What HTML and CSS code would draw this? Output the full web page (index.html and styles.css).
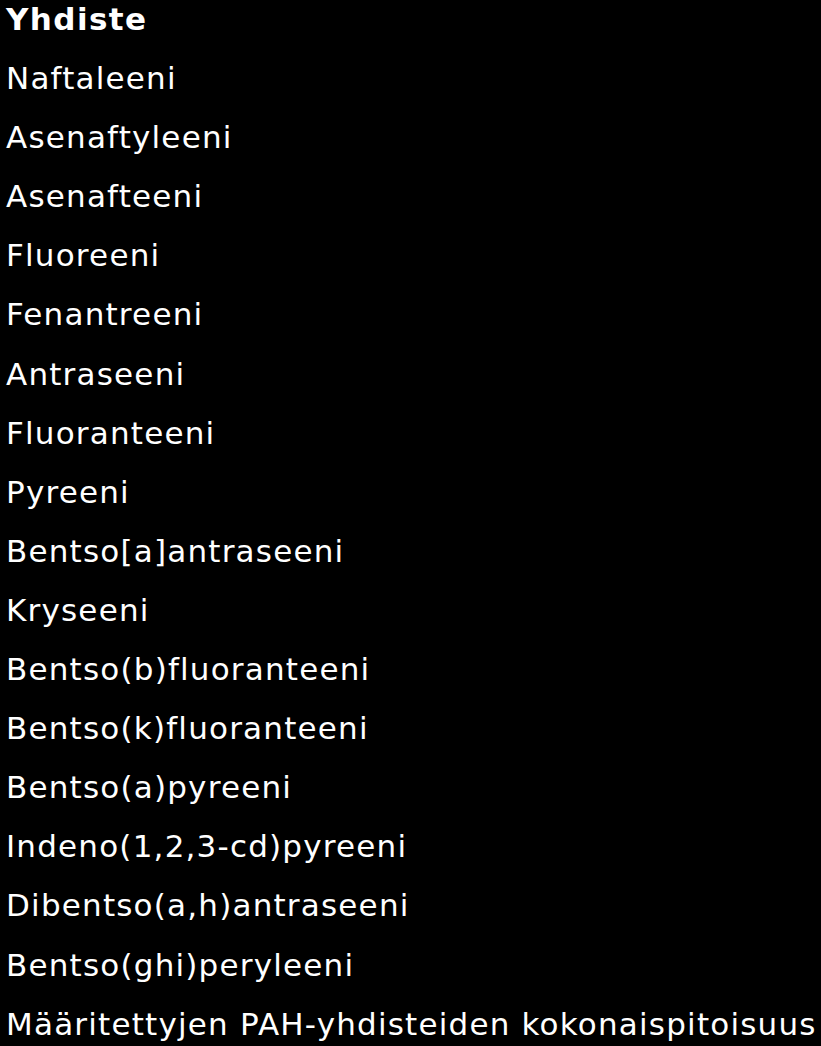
FILE: index.html
```html
<!DOCTYPE html>
<html lang="fi">
<head>
<meta charset="utf-8">
<title>Yhdiste</title>
<link rel="stylesheet" href="styles.css">
</head>
<body>
<ul class="list">
  <li class="head">Yhdiste</li>
  <li>Naftaleeni</li>
  <li>Asenaftyleeni</li>
  <li>Asenafteeni</li>
  <li>Fluoreeni</li>
  <li>Fenantreeni</li>
  <li>Antraseeni</li>
  <li>Fluoranteeni</li>
  <li>Pyreeni</li>
  <li>Bentso[a]antraseeni</li>
  <li>Kryseeni</li>
  <li>Bentso(b)fluoranteeni</li>
  <li>Bentso(k)fluoranteeni</li>
  <li>Bentso(a)pyreeni</li>
  <li>Indeno(1,2,3-cd)pyreeni</li>
  <li>Dibentso(a,h)antraseeni</li>
  <li>Bentso(ghi)peryleeni</li>
  <li>Määritettyjen PAH-yhdisteiden kokonaispitoisuus</li>
</ul>
</body>
</html>
```

FILE: styles.css
```css
html, body {
  margin: 0;
  padding: 0;
  background: #000;
  overflow: hidden;
}
body {
  width: 821px;
  height: 1046px;
  color: #fff;
  font-family: "DejaVu Sans", Verdana, sans-serif;
}
.list {
  list-style: none;
  margin: -10px 0 0 0;
  padding: 0 0 0 6px;
  font-size: 31px;
  line-height: 59.1px;
  letter-spacing: 1.2px;
  white-space: nowrap;
}
.head {
  font-weight: bold;
  letter-spacing: 1.4px;
}
```
